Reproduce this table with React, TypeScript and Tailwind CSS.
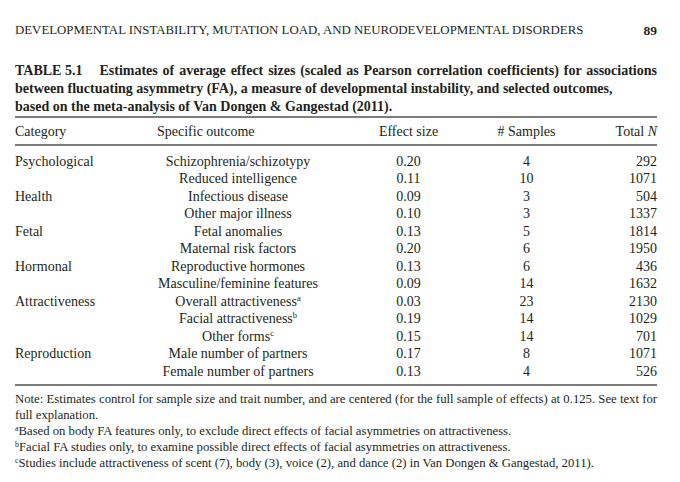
import React from "react";

const Sup = ({ c }: { c: string }) => (
  <sup className="text-[8.5px] relative -top-[5px] align-baseline">{c}</sup>
);

const rows: [string, React.ReactNode, string, string, string][] = [
  ["Psychological", "Schizophrenia/schizotypy", "0.20", "4", "292"],
  ["", "Reduced intelligence", "0.11", "10", "1071"],
  ["Health", "Infectious disease", "0.09", "3", "504"],
  ["", "Other major illness", "0.10", "3", "1337"],
  ["Fetal", "Fetal anomalies", "0.13", "5", "1814"],
  ["", "Maternal risk factors", "0.20", "6", "1950"],
  ["Hormonal", "Reproductive hormones", "0.13", "6", "436"],
  ["", "Masculine/feminine features", "0.09", "14", "1632"],
  [
    "Attractiveness",
    <>
      Overall attractiveness
      <Sup c="a" />
    </>,
    "0.03",
    "23",
    "2130",
  ],
  [
    "",
    <>
      Facial attractiveness
      <Sup c="b" />
    </>,
    "0.19",
    "14",
    "1029",
  ],
  [
    "",
    <>
      Other forms
      <Sup c="c" />
    </>,
    "0.15",
    "14",
    "701",
  ],
  ["Reproduction", "Male number of partners", "0.17", "8", "1071"],
  ["", "Female number of partners", "0.13", "4", "526"],
];

const grid = "grid grid-cols-[142px_162px_179px_57px_102px]";

export default function App() {
  return (
    <div
      className="w-[680px] h-[482px] bg-white text-[#231f20] pl-[15px] pt-[22px] overflow-hidden"
      style={{ fontFamily: '"Liberation Serif", "Times New Roman", serif' }}
    >
      <div className="w-[642px] flex justify-between items-center h-[18px]">
        <span className="text-[12.85px] whitespace-nowrap">
          DEVELOPMENTAL INSTABILITY, MUTATION LOAD, AND NEURODEVELOPMENTAL DISORDERS
        </span>
        <span className="text-[13.5px] font-bold">89</span>
      </div>

      <div className="mt-[22px] w-[642px] font-bold text-[14px] leading-[18px]">
        <div className="flex whitespace-nowrap">
          <span>TABLE 5.1</span>
          <span className="ml-[17px] flex-1 [text-align-last:justify]">
            Estimates of average effect sizes (scaled as Pearson correlation coefficients) for associations
          </span>
        </div>
        <div className="whitespace-nowrap">
          between fluctuating asymmetry (FA), a measure of developmental instability, and selected outcomes,
        </div>
        <div className="whitespace-nowrap">
          based on the meta-analysis of Van Dongen &amp; Gangestad (2011).
        </div>
      </div>

      <div className="w-[642px] h-[2px] bg-[#7d7d7d]" />
      <div className={`${grid} h-[26px] items-center text-[14px] whitespace-nowrap`}>
        <div>Category</div>
        <div>Specific outcome</div>
        <div className="flex justify-center">Effect size</div>
        <div className="flex justify-center"># Samples</div>
        <div className="text-right">
          Total <i>N</i>
        </div>
      </div>
      <div className="w-[642px] h-[2px] bg-[#7d7d7d]" />

      <div className="pt-[7px] pb-[3px] text-[14px] whitespace-nowrap">
        {rows.map((r, i) => (
          <div key={i} className={`${grid} h-[17.5px] items-center leading-none`}>
            <div>{r[0]}</div>
            <div className="flex justify-center">
              <span>{r[1]}</span>
            </div>
            <div className="flex justify-center">{r[2]}</div>
            <div className="flex justify-center">{r[3]}</div>
            <div className="text-right">{r[4]}</div>
          </div>
        ))}
      </div>
      <div className="w-[642px] h-[2px] bg-[#7d7d7d]" />

      <div className="mt-[5px] w-[642px] text-[12.7px] leading-[16.2px] whitespace-nowrap">
        <div className="[text-align-last:justify]">
          Note: Estimates control for sample size and trait number, and are centered (for the full sample of effects) at 0.125. See text for
        </div>
        <div>full explanation.</div>
        <div>
          <sup className="text-[8px]">a</sup>Based on body FA features only, to exclude direct effects of facial asymmetries on attractiveness.
        </div>
        <div>
          <sup className="text-[8px]">b</sup>Facial FA studies only, to examine possible direct effects of facial asymmetries on attractiveness.
        </div>
        <div>
          <sup className="text-[8px]">c</sup>Studies include attractiveness of scent (7), body (3), voice (2), and dance (2) in Van Dongen &amp; Gangestad, 2011).
        </div>
      </div>
    </div>
  );
}
